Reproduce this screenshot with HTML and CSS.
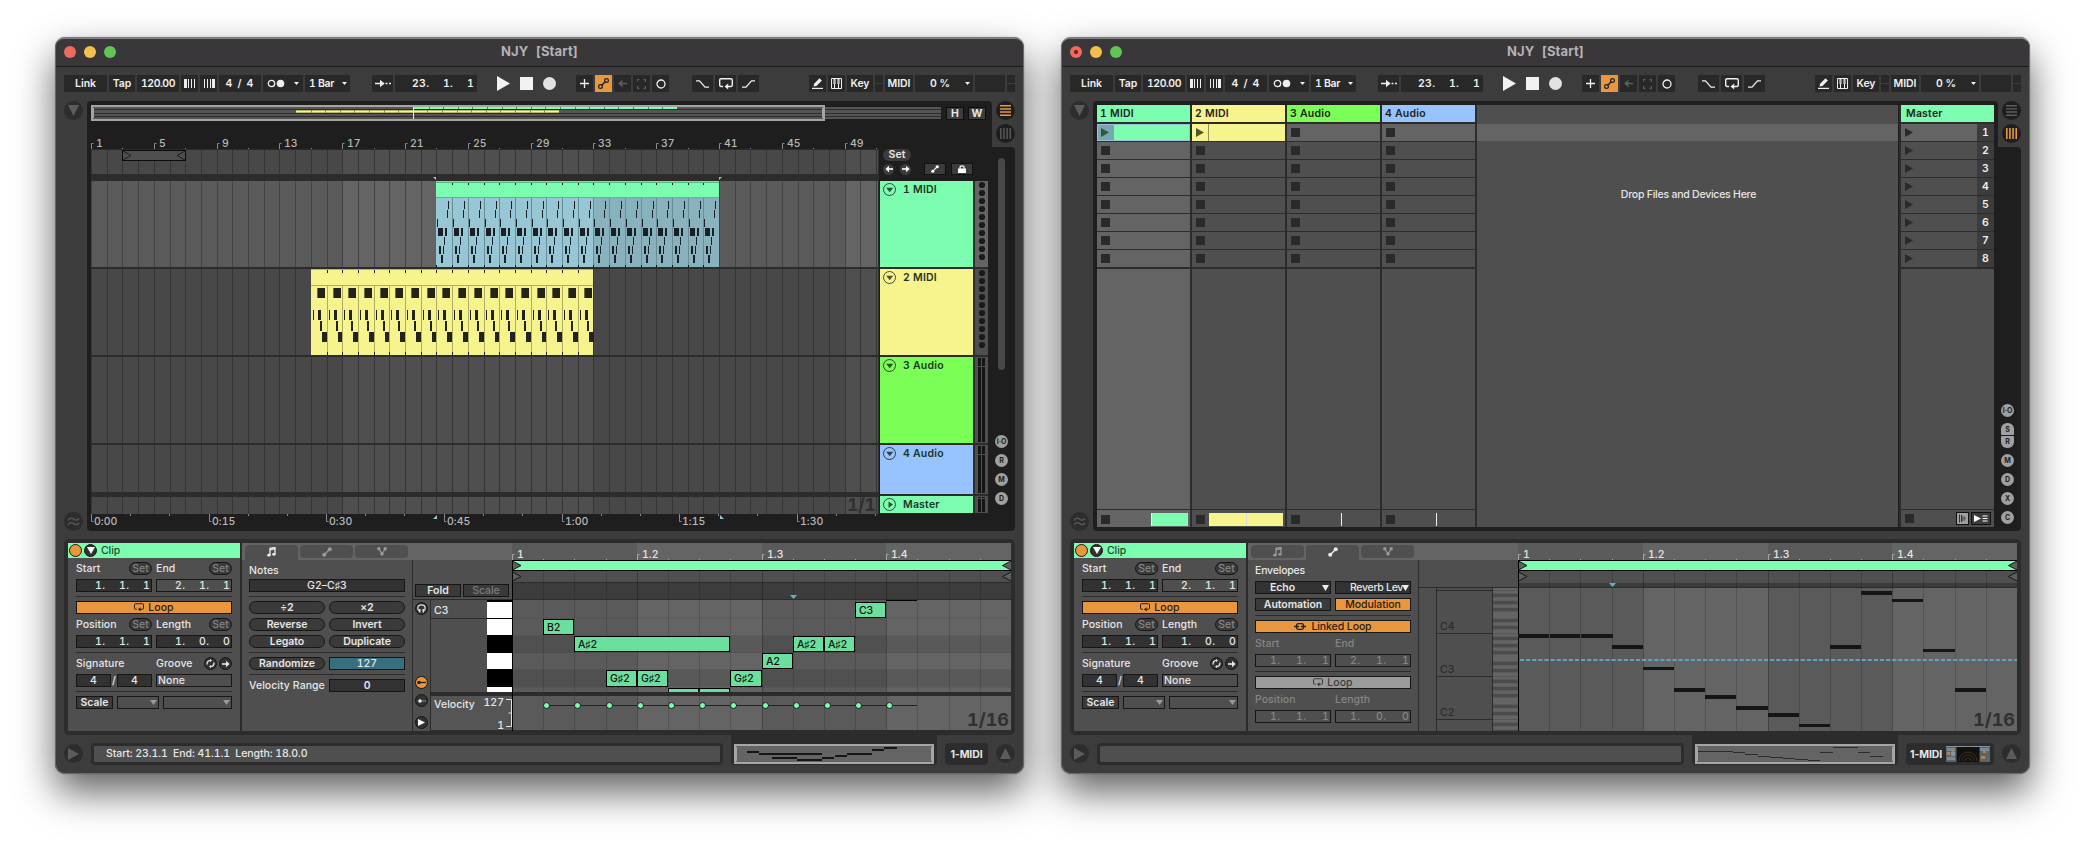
FILE: index.html
```html
<!DOCTYPE html>
<html lang="en">
<head>
<meta charset="utf-8">
<title>NJY [Start]</title>
<link rel="stylesheet" href="styles.css">
</head>
<body>
<svg class="defs" aria-hidden="true">
  <symbol id="i-down" viewBox="0 0 11 11"><path d="M0 0h11L5.5 11z" fill="currentColor"/></symbol>
  <symbol id="i-play" viewBox="0 0 13 15"><path d="M0 0l13 7.5L0 15z" fill="currentColor"/></symbol>
  <symbol id="i-loop" viewBox="0 0 14 12"><path d="M4 8.5H2.2Q.7 8.500.7 7V2.200Q.7.700 2.200.700h9.600q1.500 0 1.500 1.500V7q0 1.500-1.500 1.500H7.500" fill="none" stroke="currentColor" stroke-width="1.400"/><path d="M5.500 8.500L9.200 5.600v6z" fill="currentColor"/></symbol>
  <symbol id="i-note" viewBox="0 0 9 10"><path d="M3 8V1.200l5-.7V7" fill="none" stroke="currentColor" stroke-width="1.300"/><path d="M3 2.400l5-.7" stroke="currentColor" stroke-width="1.500"/><ellipse cx="1.900" cy="8.200" rx="1.700" ry="1.400" fill="currentColor"/><ellipse cx="6.900" cy="7.300" rx="1.700" ry="1.400" fill="currentColor"/></symbol>
  <symbol id="i-env" viewBox="0 0 10 10"><path d="M2 8l6-6" stroke="currentColor" stroke-width="1.400"/><circle cx="2.200" cy="7.800" r="2" fill="currentColor"/><circle cx="7.800" cy="2.200" r="2" fill="currentColor"/></symbol>
  <symbol id="i-expr" viewBox="0 0 10 9"><path d="M2 2l3 5 3-5" fill="none" stroke="currentColor" stroke-width="1.200"/><circle cx="1.800" cy="1.800" r="1.700" fill="currentColor"/><circle cx="8.200" cy="1.800" r="1.700" fill="currentColor"/><circle cx="5" cy="7" r="1.700" fill="currentColor"/></symbol>
  <symbol id="i-arrow" viewBox="0 0 8 8"><path d="M0 4h5" stroke="currentColor" stroke-width="1.600"/><path d="M4 .8L7.600 4 4 7.200z" fill="currentColor"/></symbol>
  <symbol id="i-arrowl" viewBox="0 0 8 8"><path d="M8 4H3" stroke="currentColor" stroke-width="1.600"/><path d="M4 .8L.4 4 4 7.200z" fill="currentColor"/></symbol>
  <symbol id="i-wave" viewBox="0 0 13 9"><path d="M1 3.500Q3.500-.5 6.500 2T12 1.500M1 8Q3.500 4 6.500 6.500T12 6" fill="none" stroke="currentColor" stroke-width="1.200"/></symbol>
  <symbol id="i-swap" viewBox="0 0 9 9"><path d="M1 5.500Q1 1.500 4.500 1.300M8 3.500Q8 7.500 4.500 7.700" fill="none" stroke="currentColor" stroke-width="1.300"/><path d="M4 0v3l2-1.500zM5 6v3L3 7.500z" fill="currentColor"/></symbol>
</svg>

<template id="toolbar">
  <div class="titlebar"><i class="light red"></i><i class="light yellow"></i><i class="light green"></i><span class="title">NJY&nbsp; [Start]</span></div>
  <div class="toolbar">
    <span class="tb w43">Link</span><span class="tb w26">Tap</span><span class="tb w42 tight">120.00</span>
    <span class="tb w17"><svg width="12" height="9"><path d="M0 0h3v9H0zM4 0h1v9H4zM7 0h1v9H7zM10 0h1v9h-1z" fill="#eee"/></svg></span>
    <span class="tb w17"><svg width="12" height="9"><path d="M1 0h1v9H1zM4 0h1v9H4zM7 0h1v9H7zM9 0h3v9H9z" fill="#eee"/></svg></span>
    <span class="tb w42 sig">4 / 4</span>
    <span class="tb w40"><svg width="32" height="9"><circle cx="4.500" cy="4.500" r="3.200" fill="none" stroke="#eee" stroke-width="1.300"/><circle cx="13.500" cy="4.500" r="3.800" fill="#eee"/><path d="M27 3h5l-2.500 3z" fill="#eee"/></svg></span>
    <span class="tb w45 bar">1 Bar<svg width="5" height="3"><path d="M0 0h5L2.500 3z" fill="#eee"/></svg></span>
    <span class="tb w21 follow"><svg width="16" height="9"><path d="M0 4.500h9M10.500 4.500h2M14 4.500h2" stroke="#eee" stroke-width="1.400"/><path d="M5 .8l4.500 3.700L5 8.200z" fill="#eee"/></svg></span>
    <span class="tb w82 pos"><span>23.</span><span>1.</span><span>1</span></span>
    <span class="transport"><svg class="tplay"><use href="#i-play"/></svg><i class="tstop"></i><i class="trec"></i></span>
    <span class="tb w17"><svg width="9" height="9"><path d="M4.500 0v9M0 4.500h9" stroke="#eee" stroke-width="1.300"/></svg></span>
    <span class="tb w17 orange"><svg width="11" height="11"><path d="M3.500 7.500l4-4" stroke="#222" stroke-width="1.400"/><circle cx="2.500" cy="8.500" r="1.900" fill="none" stroke="#222" stroke-width="1.200"/><circle cx="8.500" cy="2.500" r="1.900" fill="none" stroke="#222" stroke-width="1.200"/></svg></span>
    <span class="tb w17 faint"><svg width="9" height="9"><path d="M9 4.500H3" stroke="currentColor" stroke-width="1.500"/><path d="M4.500.5L0 4.500l4.500 4z" fill="currentColor"/></svg></span>
    <span class="tb w17 faint"><svg width="9" height="10"><path d="M0 3V.6h2.500M6.500.6H8.400V3M8.400 7v2.400H6.500M2.500 9.400H.6V7" fill="none" stroke="currentColor" stroke-width="1.200"/></svg></span>
    <span class="tb w17"><svg width="10" height="10"><circle cx="5" cy="5" r="4" fill="none" stroke="#eee" stroke-width="1.300"/></svg></span>
    <span class="tb w21 curves"><svg width="13" height="8"><path d="M0 .8h3.500L9 7.200h4" fill="none" stroke="#eee" stroke-width="1.300"/></svg></span>
    <span class="tb w21"><svg class="tloop"><use href="#i-loop"/></svg></span>
    <span class="tb w21"><svg width="13" height="8"><path d="M0 7.200h4L9.500.8H13" fill="none" stroke="#eee" stroke-width="1.300"/></svg></span>
    <span class="tb w17 push"><svg width="12" height="11"><path d="M1.500 8.500l.6-2.800L7.500.3l2.400 2.200-5.400 5.400z" fill="#eee"/><path d="M0 10.400h11" stroke="#eee" stroke-width="1.200"/></svg></span>
    <span class="tb w17"><svg width="11" height="11"><path d="M.5.5h10v10H.5zM3.500 6v4.500M7.500 6v4.500" fill="none" stroke="#eee"/><path d="M3 1h1v5H3zM7 1h1v5H7z" fill="none" stroke="#eee"/></svg></span>
    <span class="tb w26">Key</span><span class="tb w8 split"></span><span class="tb w28">MIDI</span>
    <span class="tb w58 cpu">0 %<svg width="5" height="3"><path d="M0 0h5L2.500 3z" fill="#eee"/></svg></span>
    <span class="tb w30"></span><span class="tb w8 split"></span>
  </div>
</template>

<template id="clipbox">
  <section class="clipbox">
    <header class="cliphead"><i class="dot on"></i><i class="dot"><svg width="8" height="7"><path d="M0 0h8L4 7z" fill="#fff"/></svg></i>Clip</header>
    <div class="rows">
      <div class="two"><span class="lab">Start<b class="set">Set</b></span><span class="lab">End<b class="set">Set</b></span></div>
      <div class="two"><span class="num dark"><i>1.</i><i>1.</i><i>1</i></span><span class="num"><i>2.</i><i>1.</i><i>1</i></span></div>
      <hr>
      <div class="btn on"><svg class="loopi"><use href="#i-loop"/></svg>Loop</div>
      <div class="two"><span class="lab">Position<b class="set">Set</b></span><span class="lab">Length<b class="set">Set</b></span></div>
      <div class="two"><span class="num dark"><i>1.</i><i>1.</i><i>1</i></span><span class="num dark"><i>1.</i><i>0.</i><i>0</i></span></div>
      <hr>
      <div class="two"><span class="lab">Signature</span><span class="lab">Groove<span class="minis"><i class="dot"><svg width="9" height="9"><use href="#i-swap"/></svg></i><i class="dot"><svg width="8" height="8"><use href="#i-arrow"/></svg></i></span></span></div>
      <div class="two"><span class="sigrow"><b class="btn dark">4</b>/<b class="btn dark">4</b></span><span class="btn none">None</span></div>
      <hr>
      <div class="scalerow"><b class="btn">Scale</b><b class="btn sel"><svg width="7" height="5"><path d="M0 0h7L3.500 5z" fill="#999"/></svg></b><b class="btn sel"><svg width="7" height="5"><path d="M0 0h7L3.500 5z" fill="#999"/></svg></b></div>
    </div>
  </section>
</template>

<main class="desk">
<article class="window">
  <div data-template="toolbar"></div>
  <div class="main">
    <div class="rail"><i class="round"><svg width="11" height="11"><use href="#i-down"/></svg></i><i class="round"><svg width="13" height="9"><use href="#i-wave"/></svg></i></div>
    <div class="panel arrange">
      <div class="overrow"><svg id="overview" width="850" height="16" viewBox="91 105 850 16"></svg><b class="hw first">H</b><b class="hw">W</b></div>
      <div class="arrbody">
        <svg id="timeline" width="788" height="410" viewBox="91 121 788 410"></svg>
        <div class="heads">
          <div class="locators"><b class="setpill">Set</b>
            <div class="locrow"><i class="mini"><svg width="8" height="8"><use href="#i-arrowl"/></svg></i><i class="mini"><svg width="8" height="8"><use href="#i-arrow"/></svg></i><i class="lockbtn"><svg width="8" height="8" viewBox="0 0 10 10"><use href="#i-env"/></svg></i><i class="lockbtn"><svg width="8" height="8"><path d="M0 3.500h8V8H0z" fill="#fff"/><path d="M2 4V2.500q0-1.700 2-1.700t2 1.700V4" fill="none" stroke="#fff" stroke-width="1.200"/></svg></i></div>
          </div>
          <div id="headlist" class="headlist"></div>
        </div>
      </div>
    </div>
    <div class="side">
      <div class="views"><i class="round dk"><svg width="11" height="11"><path d="M0 .8h11M0 3.900h11M0 7h11M0 10.200h11" stroke="#e8973e" stroke-width="1.500"/></svg></i><i class="round dk"><svg width="11" height="11"><path d="M.8 0v11M3.900 0v11M7.100 0v11M10.200 0v11" stroke="#5c5c5c" stroke-width="1.400"/></svg></i></div>
      <div class="sidebar"><i class="scroll"></i><div class="toggles"><i>I·O</i><i>R</i><i>M</i><i>D</i></div></div>
    </div>
  </div>
  <div class="detail">
    <div data-template="clipbox"></div>
    <section class="notes">
      <div class="tabs"><i class="tab act"><svg width="9" height="10"><use href="#i-note"/></svg></i><i class="tab"><svg width="10" height="10"><use href="#i-env"/></svg></i><i class="tab"><svg width="10" height="9"><use href="#i-expr"/></svg></i></div>
      <div class="notebody">
        <div class="rows nrows">
          <div class="lab head">Notes</div>
          <div class="btn dark">G2–C♯3</div>
          <hr>
          <div class="two"><b class="btn pill">÷2</b><b class="btn pill">×2</b></div>
          <div class="two"><b class="btn pill">Reverse</b><b class="btn pill">Invert</b></div>
          <div class="two"><b class="btn pill">Legato</b><b class="btn pill">Duplicate</b></div>
          <hr>
          <div class="two"><b class="btn pill">Randomize</b><b class="btn teal">127</b></div>
          <hr>
          <div class="two"><span class="lab wide">Velocity Range</span><b class="btn dark">0</b></div>
        </div>
        <div class="keyside">
          <div class="foldrow"><b class="btn">Fold</b><b class="btn off">Scale</b></div>
          <div class="keyrow">
            <div class="keyicons"><i class="dot"><svg width="9" height="9"><path d="M2.800 7.500Q.8 6.500.8 4.300.8.900 4.500.900t3.700 3.400q0 2.200-2 3.200" fill="none" stroke="#ddd" stroke-width="1.300"/><path d="M2 5h1.500v3.500H2zM5.500 5H7v3.500H5.500z" fill="#ddd"/></svg></i><i class="dot on k2"><svg width="9" height="5"><path d="M1 2.500h8" stroke="#222" stroke-width="1.300"/><circle cx="2" cy="2.500" r="1.800" fill="#222"/></svg></i><i class="dot k3"><svg width="8" height="4"><circle cx="2" cy="2" r="1.800" fill="#eee"/><path d="M4.500 2h1M6.700 2h1" stroke="#eee" stroke-width="1.200"/></svg></i><i class="dot k4"><svg width="7" height="7"><path d="M0 0l7 3.500L0 7z" fill="#fff"/></svg></i></div>
            <svg width="82" height="131" viewBox="430 600 82 131" id="keys"></svg>
          </div>
        </div>
      </div>
    </section>
    <svg id="roll" width="499" height="188" viewBox="512 543 499 188"></svg>
  </div>
  <div class="status">
    <i class="round"><svg width="11" height="12" viewBox="0 0 13 15" preserveAspectRatio="none"><path d="M0 0l13 7.500L0 15z" fill="currentColor"/></svg></i>
    <div class="info">Start: 23.1.1&nbsp; End: 41.1.1&nbsp; Length: 18.0.0</div>
    <div class="mini-tab"><svg id="mini1" width="200" height="20" viewBox="734 744 200 20"></svg></div>
    <div class="trackbtn">1-MIDI</div>
    <i class="round last"><svg width="11" height="11"><path d="M5.500 0L11 11H0z" fill="currentColor"/></svg></i>
  </div>
</article>

<article class="window edited">
  <div data-template="toolbar"></div>
  <div class="main">
    <div class="rail"><i class="round"><svg width="11" height="11"><use href="#i-down"/></svg></i><i class="round"><svg width="13" height="9"><use href="#i-wave"/></svg></i></div>
    <div class="panel session" id="session">
      <div class="drop"><div class="dropband"></div><span>Drop Files and Devices Here</span></div>
    </div>
    <div class="side">
      <div class="views"><i class="round dk"><svg width="11" height="11"><path d="M0 .8h11M0 3.900h11M0 7h11M0 10.200h11" stroke="#5c5c5c" stroke-width="1.400"/></svg></i><i class="round dk"><svg width="11" height="11"><path d="M.8 0v11M3.900 0v11M7.100 0v11M10.200 0v11" stroke="#e8973e" stroke-width="1.600"/></svg></i></div>
      <div class="sidebar"><div class="toggles"><i>I·O</i><span class="pair"><i>S</i><i>R</i></span><i>M</i><i>D</i><i>X</i><i>C</i></div></div>
    </div>
  </div>
  <div class="detail">
    <div data-template="clipbox"></div>
    <section class="notes">
      <div class="tabs"><i class="tab"><svg width="9" height="10"><use href="#i-note"/></svg></i><i class="tab act"><svg width="10" height="10"><use href="#i-env"/></svg></i><i class="tab"><svg width="10" height="9"><use href="#i-expr"/></svg></i></div>
      <div class="notebody">
        <div class="rows nrows erows">
          <div class="lab head">Envelopes</div>
          <div class="two"><b class="btn dark menu"><span>Echo</span><svg width="7" height="6"><path d="M0 0h7L3.500 6z" fill="#eee"/></svg></b><b class="btn dark menu rev"><span>Reverb Lev</span><svg width="7" height="6"><path d="M0 0h7L3.500 6z" fill="#eee"/></svg></b></div>
          <div class="two"><b class="btn">Automation</b><b class="btn on">Modulation</b></div>
          <hr>
          <div class="btn on linked"><svg width="12" height="7"><path d="M0 3.500h5M7 3.500h5" stroke="#222" stroke-width="1.500"/><rect x="2.600" y=".7" width="6.800" height="5.600" rx="1.500" fill="none" stroke="#222" stroke-width="1.300"/></svg>Linked Loop</div>
          <div class="two dim"><span class="lab">Start</span><span class="lab">End</span></div>
          <div class="two dim"><span class="num"><i>1.</i><i>1.</i><i>1</i></span><span class="num"><i>2.</i><i>1.</i><i>1</i></span></div>
          <hr>
          <div class="btn gray"><svg class="loopi"><use href="#i-loop"/></svg>Loop</div>
          <div class="two dim"><span class="lab">Position</span><span class="lab">Length</span></div>
          <div class="two dim"><span class="num"><i>1.</i><i>1.</i><i>1</i></span><span class="num"><i>1.</i><i>0.</i><i>0</i></span></div>
        </div>
        <svg class="octaves" id="octaves" width="100" height="171" viewBox="1418 560 100 171"></svg>
      </div>
    </section>
    <svg id="envroll" width="499" height="188" viewBox="1518 543 499 188"></svg>
  </div>
  <div class="status">
    <i class="round"><svg width="11" height="12" viewBox="0 0 13 15" preserveAspectRatio="none"><path d="M0 0l13 7.500L0 15z" fill="currentColor"/></svg></i>
    <div class="info"></div>
    <div class="mini-tab"><svg id="mini2" width="200" height="20" viewBox="1695 744 200 20"></svg></div>
    <div class="trackbtn">1-MIDI
      <svg width="44" height="16"><path d="M0 0h44v16H0z" fill="#5d6468"/><path d="M1 2h8v3H1zM34 2h9v3h-9zM1 11h8v3H1z" fill="#7a8a94"/><path d="M0 0h44v1H0zM5 6h4v4H5z" fill="#86939b"/><path d="M1 6h3v3H1zM6 3h2v3H6zM35 10h4v3h-4zM37 5h3v2h-3z" fill="#b5824a"/><path d="M10.500 1h23v15h-23z" fill="#121110"/><path d="M13 15a9 9 0 0 1 18 0M16 15a6 6 0 0 1 12 0M19 15a3 3 0 0 1 6 0" fill="none" stroke="#4a381f" stroke-width=".8"/></svg>
    </div>
    <i class="round last"><svg width="11" height="11"><path d="M5.500 0L11 11H0z" fill="currentColor"/></svg></i>
  </div>
</article>
</main>
<script src="app.js"></script>
</body>
</html>
```

FILE: styles.css
```css
* { box-sizing: border-box; }
body { margin: 0; background: #fff; font-family: Inter, "Liberation Sans", sans-serif; font-size: 10.500px; font-weight: 500; line-height: 13px; color: #e6e6e6; overflow: hidden; letter-spacing: .05px; font-variant-numeric: tabular-nums; }
i, b { font-style: normal; font-weight: 500; }
svg { display: block; flex: none; }
.defs { display: none; }
hr { margin: 0; border: 0; height: 1px; background: #2c2c2c; }

.desk { display: flex; gap: 37px; padding: 37px 0 0 55px; height: 847px; }
.window { width: 969px; height: 737px; flex: none; display: flex; flex-direction: column; background: #3c3c3c; border-radius: 10px; overflow: visible; border: 1px solid #6a6a6a; border-top: 2px solid #7d7d7d; box-shadow: 0 0 1px rgba(0,0,0,.6), 0 18px 38px rgba(0,0,0,.62); }

.titlebar { display: flex; align-items: center; height: 28px; padding: 0 8px 2px; background: #39373a; border-bottom: 1px solid #1b1b1b; border-radius: 8px 8px 0 0; }
.light { width: 12px; height: 12px; border-radius: 50%; margin-right: 8px; }
.red { background: #ed6a5e; } .yellow { background: #f5bf4f; } .green { background: #61c554; }
.edited .red { background: radial-gradient(circle, #8c1a10 0 1.800px, #ed6a5e 2.400px); }
.title { flex: 1; text-align: center; margin-right: 60px; font-size: 13px; font-weight: 700; color: #b4b2b4; letter-spacing: .15px; }

.toolbar { display: flex; gap: 2px; height: 17px; margin: 8px 8px 0 8px; }
.tb { display: flex; align-items: center; justify-content: center; height: 17px; background: #282828; color: #f0f0f0; flex: none; font-weight: 600; white-space: nowrap; letter-spacing: -.05px; }
.w8{width:8px}.w17{width:17px}.w21{width:21px}.w26{width:26px}.w28{width:28px}.w30{width:30px}.w40{width:40px}.w42{width:42px}.w43{width:43px}.w45{width:45px}.w58{width:58px}.w82{width:82px}
.tight { letter-spacing: -.45px; }
.sig { letter-spacing: 1.200px; }
.bar { justify-content: space-between; padding: 0 3px 0 4px; letter-spacing: -.35px; }
.follow { margin-left: 20px; }
.pos { justify-content: flex-end; padding-right: 1px; letter-spacing: .3px; }
.pos span:nth-child(1) { width: 31px; } .pos span:nth-child(2) { width: 24px; } .pos span:nth-child(3) { width: 9px; }
.transport { display: flex; align-items: center; gap: 10px; width: 95px; padding-left: 18px; flex: none; }
.tplay { width: 13px; height: 15px; color: #f2f2f2; }
.tstop { width: 13px; height: 13px; background: #f2f2f2; }
.trec { width: 13px; height: 13px; background: #e2e2e2; border-radius: 50%; }
.tloop { width: 14px; height: 12px; }
.orange { background: #e8973e; } .faint { color: #5c5c5c; }
.curves { margin-left: 21px; }
.push { margin-left: auto; }
.split { background: linear-gradient(#282828 8px, #3c3c3c 8px 9px, #282828 9px); }
.cpu { justify-content: space-between; padding: 0 3px 0 15px; }

.main { display: flex; height: 430px; margin: 9px 8px 0 8px; }
.rail { width: 23px; display: flex; flex-direction: column; justify-content: space-between; }
.round { width: 19px; height: 19px; border-radius: 50%; background: #2d2d2d; color: #5c5c5c; display: flex; align-items: center; justify-content: center; flex: none; }
.round.dk { background: #1e1e1e; }
.panel { width: 905px; background: #1e1e1e; border-radius: 4px 4px 0 4px; }
.arrange { padding: 4px 0 0 4px; }
.overrow { display: flex; height: 16px; align-items: center; }
.hw { width: 18px; height: 13px; border: 1px solid #0e0e0e; background: #3c3c3c; font-weight: 700; text-align: center; line-height: 12px; margin-left: 4px; }
.hw.first { margin-left: 5px; }
.arrbody { display: flex; }
.heads { width: 110px; margin-left: 1px; }
.locators { height: 60px; padding: 28px 0 0 3px; }
.setpill { display: block; width: 28px; height: 12px; border-radius: 6px; background: #3c3c3c; text-align: center; line-height: 12px; font-weight: 600; }
.locrow { display: flex; align-items: center; margin-top: 2px; }
.mini { width: 11px; height: 11px; border-radius: 50%; background: #3c3c3c; display: flex; align-items: center; justify-content: center; margin-right: 6px; color: #fff; }
.lockbtn { width: 22px; height: 12px; background: #3c3c3c; border: 1px solid #111; display: flex; align-items: center; justify-content: center; margin-left: 5px; color: #fff; }
.mini + .lockbtn { margin-left: 7px; }
.head { display: flex; gap: 2px; background: #2c2c2c; margin-bottom: 2px; }
.headlist { background: #2c2c2c; width: 108px; }
.hname { width: 93px; padding: 2px 0 0 3px; display: flex; gap: 7px; color: #1d3527; font-weight: 600; line-height: 14px; letter-spacing: .2px; }
.hname svg { color: rgba(0,0,0,.68); }
.g { background: #7dfdb0; } .y { background: #f7f38d; } .l { background: #7bff57; } .b { background: #97c4fe; }

.side { width: 23px; display: flex; flex-direction: column; }
.views { height: 46px; padding-left: 4px; display: flex; flex-direction: column; gap: 4px; }
.sidebar { flex: 1; background: #1e1e1e; border-radius: 0 4px 4px 0; padding: 11px 4px 26px 0; display: flex; flex-direction: column; align-items: center; justify-content: space-between; }
.scroll { width: 7px; height: 212px; border-radius: 4px; background: #484848; }
.toggles { display: flex; flex-direction: column; gap: 6px; margin-top: auto; }
.toggles i { width: 13px; height: 13px; border-radius: 50%; background: #a0a0a0; color: #1e1e1e; font-size: 7px; font-weight: 700; text-align: center; line-height: 13px; letter-spacing: -.1px; display: block; }
.pair { display: flex; flex-direction: column; gap: 1px; }
.pair i { height: 12px; line-height: 13px; }
.pair i:first-child { border-radius: 6px 6px 1px 1px; } .pair i:last-child { border-radius: 1px 1px 6px 6px; line-height: 11px; }
.edited .sidebar { padding-bottom: 7px; }

.session { display: flex; gap: 2px; padding: 4px; }
.track { width: 93px; height: 422px; display: flex; flex-direction: column; background: #2c2c2c; color: #222; box-shadow: 2px 0 #2c2c2c; }
.thead { height: 17px; padding: 2px 0 0 3px; margin-bottom: 2px; font-weight: 600; letter-spacing: .2px; }
.slot { height: 17px; margin-bottom: 1px; background: #4f4f4f; padding: 4px 0 0 4px; display: flex; }
.slot.s0, .track.sel .slot, .track.sel .fill, .track.sel .foot { background: #646464; }
.sq { width: 9px; height: 9px; background: #2a2a2a; flex: none; }
.slot.clip { padding: 0; }
.clip .launch { width: 17px; padding: 4px 0 0 4px; border-right: 1px solid rgba(0,0,0,.4); }
.track .slot.clip.g { background: #7dfdb0; border: 1px solid #97c6d5; color: #275b3c; }
.g .launch { background: #7ba5b0; padding: 3px 0 0 3px; width: 16px; border: 0; }
.track .slot.clip.y { background: #f7f38d; color: #55532e; }
.fill { flex: 1; margin: 1px 0; background: #4f4f4f; }
.foot { height: 17px; background: #4f4f4f; display: flex; }
.foot .sq { margin: 4px 0 0 4px; }
.drop { width: 421px; background: #4f4f4f; padding-top: 19px; text-align: center; letter-spacing: -.24px; }
.dropband { height: 17px; background: #646464; margin-bottom: 47px; }
.drop span { padding-left: 2px; }
.master .slot { padding: 0; justify-content: space-between; align-items: center; }
.master .slot svg { margin-left: 4px; color: #2a2a2a; }
.master .thead { padding-left: 5px; }
.scene { width: 17px; height: 17px; line-height: 17px; background: #3c3c3c; color: #eee; text-align: center; font-weight: 600; }
.master { margin-left: 1px; box-shadow: -2px 0 #2c2c2c; }
.master .fbtns { display: flex; gap: 2px; margin: 2px 3px 0 auto; }
.master .fbtns svg { border: 1px solid #111; background: #3c3c3c; }
.master .fbtns svg:first-child { background: #a0a0a0; }

.detail { display: flex; height: 196px; margin: 8px 8px 0 8px; padding: 4px; background: #2c2c2c; border-radius: 5px; }
.clipbox { width: 172px; height: 188px; background: #4f4f4f; }
.cliphead { height: 15px; background: #7dfdb0; display: flex; align-items: center; gap: 2px; padding-left: 1px; color: #1f4a31; letter-spacing: -.1px; }
.cliphead .dot:nth-child(2) { margin-right: 2px; }
.dot { width: 13px; height: 13px; border-radius: 50%; background: #323232; border: 1px solid #161616; display: flex; align-items: center; justify-content: center; flex: none; }
.dot.on { background: #e8973e; }
.rows { display: flex; flex-direction: column; gap: 4px; padding: 4px 8px 0; }
.two { display: grid; grid-template-columns: 76px 76px; gap: 4px; height: 13px; }
.lab { display: flex; justify-content: space-between; height: 13px; line-height: 14px; white-space: nowrap; }
.set { width: 23px; height: 13px; border-radius: 7px; border: 1px solid #161616; background: #3a3a3a; color: #858585; text-align: center; line-height: 12px; }
.num { border: 1px solid #161616; height: 13px; line-height: 12px; display: flex; justify-content: flex-end; letter-spacing: .4px; }
.num i { width: 24px; } .num i:last-child { width: 8px; }
.dark { background: #323232; }
.btn { height: 13px; border: 1px solid #161616; background: #3a3a3a; line-height: 12px; display: flex; align-items: center; justify-content: center; gap: 4px; white-space: nowrap; overflow: hidden; }
b.btn { font-weight: 600; letter-spacing: -.05px; }
.btn.dark { background: #323232; }
.btn.on { background: #e8973e; color: #2a2014; font-weight: 500; }
.btn.off { color: #7c7c7c; font-weight: 500; }
.btn.pill { border-radius: 7px; }
.btn.teal { background: #36707f; font-weight: 500; }
.btn.gray { background: #9b9b9b; color: #3c3c3c; }
.btn.linked { gap: 5px; letter-spacing: -.1px; }
.loopi { width: 10px; height: 9px; }
.minis { display: flex; gap: 2px; }
.sigrow { display: flex; justify-content: space-between; }
.sigrow .btn { width: 35px; font-weight: 500; }
.none { justify-content: flex-start; padding-left: 1px; background: #4f4f4f; }
.scalerow { display: flex; gap: 4px; }
.scalerow .btn:nth-child(1) { width: 37px; }
.scalerow .sel { width: 42px; justify-content: flex-end; background: #4f4f4f; padding-right: 1px; }
.scalerow .sel:last-child { width: 69px; }

.notes { width: 270px; margin-left: 2px; display: flex; flex-direction: column; background: #4f4f4f; }
.tabs { height: 17px; background: #646464; display: flex; gap: 2px; padding: 2px 0 0 3px; }
.tab { width: 53px; height: 13px; border-radius: 4px; background: #4f4f4f; color: #999; display: flex; align-items: center; justify-content: center; }
.tab.act { height: 15px; border-radius: 4px 4px 0 0; color: #eee; padding-bottom: 2px; }
.notebody { display: flex; height: 171px; }
.nrows { width: 170px; padding: 2px 7px 0; }
.lab.head { height: 13px; line-height: 18px; background: none; margin: 0; }
.erows .lab.head { margin-bottom: 2px; letter-spacing: -.2px; }
.erows .num i { width: 26px; } .erows .num i:last-child { width: 8px; }
.dim { color: #858585; }
.menu { justify-content: space-between; padding: 0 1px 0 14px; gap: 0; }
b.btn.rev { letter-spacing: -.3px; font-weight: 500; padding-left: 14px; }
.rev span { flex: none; }
.rev svg { margin-left: -4px; }
.keyside { width: 100px; border-left: 1px solid #2c2c2c; }
.foldrow { display: flex; gap: 2px; padding: 24px 2px 0; height: 40px; border-bottom: 1px solid #2c2c2c; }
.foldrow .btn { width: 46px; }
.keyrow { display: flex; height: 131px; }
.keyicons { width: 17px; padding: 2px 2px 0; }
.k2 { margin-top: 61px; } .k3 { margin-top: 5px; } .k4 { margin-top: 9px; }

.status { display: flex; height: 37px; margin: 0 8px 0 8px; }
.status .round { margin-top: 9px; }
.info { flex: 1; margin: 8px 8px 0 8px; height: 22px; border: 3px solid #2c2c2c; border-radius: 4px; background: #4f4f4f; line-height: 16px; padding-left: 12px; white-space: nowrap; letter-spacing: -.08px; }
.mini-tab { width: 206px; height: 30px; background: #2c2c2c; border-radius: 0 0 4px 4px; padding: 9px 3px 0; }
.trackbtn { height: 22px; margin: 8px 8px 0 8px; padding: 0 4px; background: #2c2c2c; border-radius: 4px; font-weight: 700; display: flex; align-items: center; gap: 4px; width: 43px; white-space: nowrap; letter-spacing: -.1px; justify-content: center; font-variant-numeric: normal; }
.edited .trackbtn { width: 88px; justify-content: space-between; }

text { font-size: 10.500px; font-weight: 500; fill: #b8b8b8; letter-spacing: .05px; }
.t-light { fill: #e6e6e6; }
.t-note { fill: #111; letter-spacing: -.1px; }
.t-big { font-size: 18px; font-weight: 700; fill: #303030; letter-spacing: 0; }
.t-dim { fill: #2c2c2c; }
```

FILE: app.js
```js
document.querySelectorAll('[data-template]').forEach(slot => {
  const tpl = document.getElementById(slot.dataset.template);
  slot.replaceWith(tpl.content.cloneNode(true));
});

const rect = (x, y, w, h, fill, extra = '') =>
  `<rect x="${x}" y="${y}" width="${w}" height="${h}" fill="${fill}" ${extra}/>`;
const text = (x, y, s, cls = '', extra = '') => `<text x="${x}" y="${y}" class="${cls}" ${extra}>${s}</text>`;
const path = (d, stroke, fill = 'none', w = 1) =>
  `<path d="${d}" stroke="${stroke}" fill="${fill}" stroke-width="${w}"/>`;
const put = (id, html) => { document.getElementById(id).innerHTML = html; };

/* Arrangement timeline */
const bar = n => Math.round(91 + (n - 1) * 15.7);
(() => {
  let s = '';
  const band = (y, h, dark, lite, line) => {
    s += rect(91, y, 787, h, dark);
    s += rect(bar(17), y, bar(33) - bar(17), h, lite) + rect(bar(49), y, 878 - bar(49), h, lite);
    for (let n = 1; n <= 51; n++) s += rect(bar(n), y, 1, h, line);
  };
  for (let n = 1; n <= 51; n += 2) {
    const x = bar(n);
    if (n % 4 === 1) {
      s += path(`M${x + .5} 149v-5.500h2`, '#8a8a8a');
      s += text(x + 5, 147, n);
    } else s += rect(x, 148, 1, 2, '#8a8a8a');
  }
  s += rect(91, 149, 788, 382, '#2c2c2c');
  band(150, 24, '#484848', '#4f4f4f', '#353535');
  band(181, 86, '#5a5a5a', '#646464', '#434343');
  for (const [y, h] of [[269, 86], [357, 86], [445, 47], [497, 17]]) band(y, h, '#484848', '#4f4f4f', '#353535');
  s += rect(122.5, 150.5, 63, 10, '#4f4f4f', 'stroke="#0c0c0c"');
  s += path('M123 151l8 4.500-8 4.500M185 151l-8 4.500 8 4.500', '#1c1c1c');

  /* first clip */
  const a = bar(23), b = bar(41), m = bar(33);
  s += rect(a, 181, b - a, 86, '#97c6d5') + rect(m, 197, b - m, 70, '#89b2bf');
  s += rect(a, 182, b - a, 16, '#4fbe80') + rect(a, 183, b - a, 14, '#7dfdb0');
  for (let n = 23; n < 41; n++) {
    const x = bar(n);
    if (n > 23) s += rect(x, 183, 1, 2, '#111') + rect(x, 198, 1, 69, '#6b8d97');
    s += rect(x, 265, 1, 2, '#111');
    for (const [dx, y, w] of [[12, 201, 1], [11, 210, 1], [1, 219, 1], [2, 228, 5], [9, 228, 2], [8, 237, 1], [3, 246, 2], [7, 246, 1], [5, 255, 2]])
      s += rect(x + dx, y, w, 8, '#1a1f22');
  }
  s += path(`M${a - 3} 177h3v3z`, 'none', '#97c6d5') + path(`M${b + 3} 177h-3v3z`, 'none', '#97c6d5');

  /* second clip */
  const c = bar(15), d = bar(33);
  s += rect(c, 269, d - c, 86, '#b9b668') + rect(c, 270, d - c, 85, '#f7f38d') + rect(c, 285, d - c, 1, '#b0ad63');
  for (let n = 15; n < 33; n++) {
    const x = bar(n);
    if (n > 15) s += rect(x, 270, 1, 3, '#222') + rect(x, 286, 1, 69, '#b0ad63') + rect(x, 352, 1, 3, '#222');
    s += rect(x + 6, 288, 8, 10, '#706e3e') + rect(x + 7, 288, 7, 10, '#24231a');
    for (const [dx, y, w] of [[2, 310, 1], [7, 310, 3], [9, 321, 2], [11, 332, 5]]) s += rect(x + dx, y, w, 10, '#24231a');
  }
  s += text(847, 510.500, '1/1', 't-big', 'textLength="29"');

  s += rect(91, 514, 788, 17, '#1e1e1e');
  ['0:00', '0:15', '0:30', '0:45', '1:00', '1:15', '1:30'].forEach((t, i) => {
    const x = Math.round(91 + i * 117.650);
    s += path(`M${x + .5} 514v7.500h2`, '#8a8a8a') + text(x + 3, 525, t);
    for (const k of [1, 2]) s += rect(Math.round(x + k * 39.200), 514, 1, 2, '#8a8a8a');
  });
  s += path('M437 515v4h-4z', 'none', '#97c6d5') + path('M720 515v4h4z', 'none', '#97c6d5');
  s += rect(878, 149, 1, 365, '#2c2c2c');
  put('timeline', s);
})();

/* Arrangement overview */
(() => {
  let s = rect(93, 107, 848, 12, '#2c2c2c');
  for (const [y, h] of [[107, 2], [110, 3], [114, 2], [117, 2]]) s += rect(93, y, 848, h, '#555');
  s += rect(296, 110, 263, 3, '#b9b668') + rect(296, 111, 263, 1, '#f7f38d') + rect(414, 107, 263, 2, '#7dfdb0');
  for (let i = 1; i < 18; i++) s += rect(Math.round(296 + i * 14.600), 110, 1, 3, '#8d8a50') + rect(Math.round(414 + i * 14.600), 107, 1, 2, '#3f8a5e');
  s += rect(413, 107, 1, 12, '#eee');
  s += rect(92, 106, 732, 14, 'none', 'stroke="#a5a5a5" stroke-width="2"') + rect(93, 108, 1, 10, '#a5a5a5') + rect(822, 108, 1, 10, '#a5a5a5');
  put('overview', s);
})();

/* Track headers */
const tracks = [
  { name: '1 MIDI', c: 'g', h: 86, midi: true },
  { name: '2 MIDI', c: 'y', h: 86, midi: true },
  { name: '3 Audio', c: 'l', h: 86 },
  { name: '4 Audio', c: 'b', h: 49 },
];
put('headlist', tracks.concat({ name: 'Master', c: 'g', h: 17 }).map((t, i) => {
  const last = i === 4;
  let m = rect(0, 0, 13, t.h, i === 0 ? '#646464' : '#4f4f4f');
  if (t.midi) for (let k = 0; k < 10; k++) m += `<circle cx="7" cy="${4 + k * 8}" r="3.100" fill="#1a1a1a"/>`;
  else {
    m += rect(3, 1, 3, t.h - 2, '#151515') + rect(7, 1, 3, t.h - 2, '#151515');
    m += rect(3, last ? 2 : 9, 7, 1, '#4f4f4f');
  }
  const tri = last ? 'M5.500 3.500l4.500 3-4.500 3.500z' : 'M3.200 4.800h7l-3.500 4.500z';
  return `<div class="head" style="height:${t.h}px"><div class="hname ${t.c}"><svg width="13" height="13"><circle cx="6.500" cy="6.500" r="6" fill="none" stroke="currentColor"/><path d="${tri}" fill="currentColor"/></svg><span>${t.name}</span></div><svg width="13" height="${t.h}">${m}</svg></div>`;
}).join(''));

/* Piano keys and velocity scale */
(() => {
  let s = rect(430, 600, 82, 131, '#2c2c2c') + rect(431, 600, 56, 92, '#4f4f4f') + rect(431, 618, 56, 1, '#2c2c2c');
  s += text(434, 614, 'C3', 't-light');
  s += rect(487, 600, 25, 92, '#000');
  for (const [y, h] of [[602, 16], [619, 16], [653, 16], [687, 5]]) s += rect(487, y, 25, h, '#fff');
  s += rect(431, 696, 81, 34, '#555');
  s += text(434, 707.500, 'Velocity', 't-light') + text(504, 705.500, '127', 't-light', 'text-anchor="end"') + text(504, 728.500, '1', 't-light', 'text-anchor="end"');
  s += path('M506 699.500h5.500v27H506M508.500 713h3', '#e2e2e2');
  put('keys', s);
})();

/* Ruler and loop brace shared by both clip editors */
const editor = (x0, step) => {
  const x1 = x0 + 499, X = n => Math.round(x0 + n * step);
  let s = rect(x0, 543, 499, 188, '#5a5a5a');
  s += rect(X(4), 543, X(8) - X(4), 188, '#646464') + rect(X(12), 543, x1 - X(12), 188, '#646464');
  s += rect(x0, 560, 499, 28, '#4f4f4f');
  ['1', '1.2', '1.3', '1.4'].forEach((t, i) => {
    s += path(`M${X(i * 4) + .5} 560v-5.500h2`, '#a8a8a8') + text(X(i * 4) + 5, 558, t, 't-light');
    for (const k of [1, 2, 3]) s += rect(X(i * 4 + k), 559, 1, 1, '#a8a8a8');
  });
  s += rect(x0, 560, 499, 11, '#000') + rect(x0 + 1, 561, 498, 9, '#7dfdb0');
  return { s, X, x1 };
};
const handles = (x0, x1) =>
  [565.500, 576.500].map(y => path(`M${x0 + .5} ${y - 4.500}l8.500 4.500-8.500 4.500M${x1} ${y - 4.500}l-8.500 4.500 8.500 4.500`, '#161616', '#5f5f5f')).join('');

(() => {
  const { s: base, X, x1 } = editor(512, 31.190);
  let s = base + rect(512, 582, 499, 18, '#2c2c2c') + rect(512, 583, 499, 16, '#3c3c3c');
  for (const y of [636, 670]) s += rect(512, y, 499, 17, '#000', 'fill-opacity=".1"');
  for (const y of [618, 635, 652, 669, 687]) s += rect(512, y, 499, 1, '#000', 'fill-opacity=".06"');
  for (let n = 1; n < 16; n++) s += rect(X(n), 571, 1, 160, '#000', `fill-opacity="${n % 4 ? .14 : .26}"`);
  s += handles(512, x1) + rect(512, 560, 1, 171, '#000');
  const note = (n, len, y, h, t) => {
    s += rect(X(n) + .5, y + .5, X(n + len) - X(n) - 1, h - 1, '#6bdf9e', 'stroke="#000"');
    if (t) s += text(X(n) + 4, y + 12, t, 't-note');
  };
  note(1, 1, 619, 16, 'B2'); note(2, 5, 636, 16, 'A♯2'); note(3, 1, 670, 17, 'G♯2'); note(4, 1, 670, 17, 'G♯2');
  note(5, 1, 688, 8); note(6, 1, 688, 8); note(7, 1, 670, 17, 'G♯2'); note(8, 1, 653, 16, 'A2');
  note(9, 1, 636, 16, 'A♯2'); note(10, 1, 636, 16, 'A♯2'); note(11, 1, 602, 16, 'C3');
  s += rect(X(12), 600, 31, 1, '#000') + path('M790 595h7l-3.500 4z', 'none', '#5bb5cf');
  s += rect(512, 692, 499, 4, '#2c2c2c') + rect(512, 730, 499, 1, '#2c2c2c');
  for (let k = 0; k < 4; k++) s += rect(X(k * 4), 696, (k < 3 ? X(k * 4 + 4) : x1) - X(k * 4), 34, k % 2 ? '#646464' : '#5a5a5a');
  for (let n = 1; n < 16; n++) s += rect(X(n), 696, 1, 34, '#000', `fill-opacity="${n % 4 ? .14 : .26}"`);
  s += rect(X(1), 705, 374, 1, '#222') + rect(512, 692, 1, 39, '#000');
  for (let n = 1; n <= 12; n++) s += `<circle cx="${X(n) + 3.500}" cy="705.500" r="3" fill="#7dfdb0" stroke="#1c1c1c"/>`;
  s += text(967, 725.500, '1/16', 't-big', 'textLength="42"');
  put('roll', s);
})();

(() => {
  const { s: base, X, x1 } = editor(1518, 31.190);
  let s = base + rect(1518, 583, 499, 5, '#3c3c3c') + rect(1518, 587, 499, 1, '#2c2c2c');
  for (let n = 1; n < 16; n++) s += rect(X(n), 571, 1, 160, '#000', `fill-opacity="${n % 4 ? .16 : .28}"`);
  s += handles(1518, x1) + rect(1518, 560, 1, 171, '#000');
  [634, 634, 634, 645, 667, 688, 695, 706, 713, 724, 645, 591, 599, 649, 688].forEach((y, n) => {
    s += rect(X(n) + (n === 1 || n === 2 ? 1 : 0), y, X(n + 1) - X(n) - (n === 1 ? 1 : 0), y === 667 || y > 720 || y === 599 || y === 649 ? 3 : 4, '#151515');
  });
  s += `<path d="M1520 660h497" stroke="#5aa7ba" stroke-width="2" stroke-dasharray="4.200 1.900"/>`;
  s += path('M1609 583h7l-3.500 4z', 'none', '#5bb5cf');
  s += text(1973, 725.500, '1/16', 't-big', 'textLength="42"');
  put('envroll', s);
})();

/* Octave column of the envelope editor */
(() => {
  let s = rect(1418, 560, 1, 171, '#2c2c2c') + rect(1418, 587, 100, 1, '#2c2c2c') + rect(1436, 588, 1, 143, '#2c2c2c');
  s += rect(1493, 588, 25, 143, '#646464');
  const black = [1, 3, 6, 8, 10];
  for (let o = -1; o < 4; o++) {
    const y = 719 - o * 43;
    for (const k of black) {
      const t = y - (k + 1) * 3.583, top = Math.max(588, t);
      if (t + 3.500 > 588 && t < 731) s += rect(1493, top.toFixed(1), 25, (t + 3.500 - top).toFixed(1), '#4b4b4b');
    }
    if (y > 588 && y < 731) {
      s += rect(1436, y, 57, 1, '#2c2c2c') + rect(1493, y, 25, 1, '#575757');
      if (o < 3) s += text(1440, y - 3.500, 'C' + (o + 2), 't-dim');
    }
  }
  s += rect(1492, 588, 1, 143, '#2c2c2c');
  put('octaves', s);
})();

/* Clip overviews in the status bar */
(() => {
  const frame = x => rect(x, 744, 200, 20, '#a5a5a5') + rect(x + 2, 746, 196, 16, '#646464') + rect(x + 2, 747, 1, 14, '#a5a5a5') + rect(x + 197, 747, 1, 14, '#a5a5a5');
  let s = frame(734);
  for (const [x, w, y] of [[747, 12, 751], [759, 63, 753], [772, 25, 757], [797, 25, 759], [822, 12, 757], [835, 12, 755], [847, 25, 753], [872, 12, 749], [884, 13, 747]]) s += rect(x, y, w, 2, '#151515');
  put('mini1', s);
  s = frame(1695);
  [[1698, 35, 751], [1733, 12, 752], [1745, 13, 754], [1758, 12, 756], [1770, 13, 757], [1783, 12, 758], [1795, 13, 759], [1808, 12, 760], [1820, 13, 752], [1833, 25, 747], [1858, 12, 752], [1870, 13, 756]].forEach(([x, w, y]) => { s += rect(x, y, w, 1, '#2c2c2c'); });
  put('mini2', s);
})();

/* Session view */
(() => {
  const tri = '<svg width="8" height="9"><path d="M0 0l8 4.500L0 9z" fill="currentColor"/></svg>';
  const meter = [
    rect(54, 3, 37, 13, '#7dfdb0') + rect(54, 3, 1, 13, '#eee'),
    rect(17, 3, 74, 13, '#f7f38d') + rect(54, 3, 1, 13, '#ddd'),
    rect(54, 3, 1, 13, '#eee'), rect(54, 3, 1, 13, '#eee'),
  ];
  const html = tracks.map((t, i) => {
    let slots = '';
    for (let r = 0; r < 8; r++)
      slots += r === 0 && t.midi
        ? `<div class="slot clip ${t.c}"><i class="launch">${tri}</i></div>`
        : `<div class="slot s${r}"><i class="sq"></i></div>`;
    return `<div class="track ${i ? '' : 'sel'}"><div class="thead ${t.c}">${t.name}</div>${slots}<div class="fill"></div><div class="foot"><svg width="93" height="17">${rect(4, 5, 9, 9, '#2a2a2a')}${meter[i]}</svg></div></div>`;
  }).join('');
  const session = document.getElementById('session');
  session.insertAdjacentHTML('afterbegin', html);
  let scenes = '';
  for (let r = 0; r < 8; r++) scenes += `<div class="slot s${r}">${tri}<span class="scene">${r + 1}</span></div>`;
  session.insertAdjacentHTML('beforeend', `<div class="track master"><div class="thead g">Master</div>${scenes}<div class="fill"></div><div class="foot"><i class="sq"></i><div class="fbtns"><svg width="13" height="13"><path d="M2.500 1.500v8M4.500 2v7M7.500 3.500v4" stroke="#333"/><path d="M5 2.500l4.500 3-4.500 3z" fill="#666"/></svg><svg width="20" height="13"><path d="M2 2l7 3.500L2 9z" fill="#fff"/><path d="M10.500 3h5M10.500 5.500h5M10.500 8h5" stroke="#fff"/></svg></div></div></div>`);
})();
```
